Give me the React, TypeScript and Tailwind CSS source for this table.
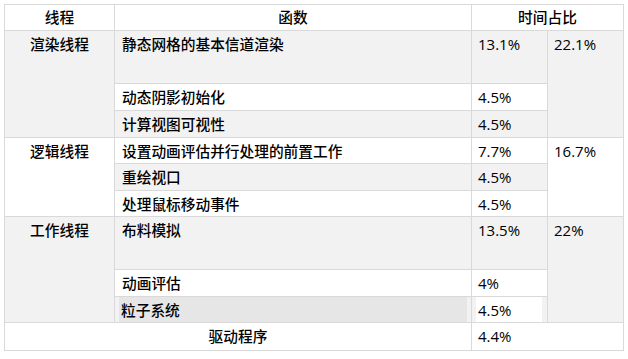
const cell = "flex items-start leading-[18px] pt-[4px]";
const num = "flex items-start leading-[18px] pt-[4px] text-[15px] font-normal";

export default function App() {
  return (
    <div className="min-h-screen bg-white pl-[4px] pt-[4px] text-[14.7px] font-medium text-black" style={{ fontFamily: '"Open Sans", "Noto Sans CJK SC", sans-serif' }}>
      <div className="grid w-fit grid-cols-[109px_356px_75px_75px] grid-rows-[25px_52px_26px_26px_25px_26px_25px_52px_26px_25px_27px] gap-px bg-[#d9d9d9] p-px">
        {/* header */}
        <div className="col-start-1 row-start-1 flex items-center justify-center bg-white">线程</div>
        <div className="col-start-2 row-start-1 flex items-center justify-center bg-white">函数</div>
        <div className="col-start-3 col-span-2 row-start-1 flex items-center justify-center bg-white">时间占比</div>

        {/* 渲染线程 */}
        <div className={`${cell} col-start-1 row-start-2 row-span-3 justify-center bg-[#f2f2f2]`}>渲染线程</div>
        <div className={`${cell} col-start-2 row-start-2 pl-[7px] bg-[#f2f2f2]`}>静态网格的基本信道渲染</div>
        <div className={`${num} col-start-3 row-start-2 pl-[6px] bg-[#f2f2f2]`}>13.1%</div>
        <div className={`${num} col-start-4 row-start-2 row-span-3 pl-[6px] bg-[#f2f2f2]`}>22.1%</div>
        <div className={`${cell} col-start-2 row-start-3 pl-[7px] bg-white`}>动态阴影初始化</div>
        <div className={`${num} col-start-3 row-start-3 pl-[6px] bg-white`}>4.5%</div>
        <div className={`${cell} col-start-2 row-start-4 pl-[7px] bg-[#f2f2f2]`}>计算视图可视性</div>
        <div className={`${num} col-start-3 row-start-4 pl-[6px] bg-[#f2f2f2]`}>4.5%</div>

        {/* 逻辑线程 */}
        <div className={`${cell} col-start-1 row-start-5 row-span-3 justify-center bg-white`}>逻辑线程</div>
        <div className={`${cell} col-start-2 row-start-5 pl-[7px] bg-white`}>设置动画评估并行处理的前置工作</div>
        <div className={`${num} col-start-3 row-start-5 pl-[6px] bg-white`}>7.7%</div>
        <div className={`${num} col-start-4 row-start-5 row-span-3 pl-[6px] bg-white`}>16.7%</div>
        <div className={`${cell} col-start-2 row-start-6 pl-[7px] bg-[#f2f2f2]`}>重绘视口</div>
        <div className={`${num} col-start-3 row-start-6 pl-[6px] bg-[#f2f2f2]`}>4.5%</div>
        <div className={`${cell} col-start-2 row-start-7 pl-[7px] bg-white`}>处理鼠标移动事件</div>
        <div className={`${num} col-start-3 row-start-7 pl-[6px] bg-white`}>4.5%</div>

        {/* 工作线程 */}
        <div className={`${cell} col-start-1 row-start-8 row-span-3 justify-center bg-[#f2f2f2]`}>工作线程</div>
        <div className={`${cell} col-start-2 row-start-8 pl-[7px] bg-[#f2f2f2]`}>布料模拟</div>
        <div className={`${num} col-start-3 row-start-8 pl-[6px] bg-[#f2f2f2]`}>13.5%</div>
        <div className={`${num} col-start-4 row-start-8 row-span-3 pl-[6px] bg-[#f2f2f2]`}>22%</div>
        <div className={`${cell} col-start-2 row-start-9 pl-[7px] bg-white`}>动画评估</div>
        <div className={`${num} col-start-3 row-start-9 pl-[6px] bg-white`}>4%</div>
        <div className="col-start-2 row-start-10 flex bg-[#f2f2f2] pl-[4px] pr-[4px]">
          <div className={`${cell} flex-1 pl-[2px] bg-[#e6e6e6]`}>粒子系统</div>
        </div>
        <div className="col-start-3 row-start-10 flex bg-[#f2f2f2] pl-[4px] pr-[5px]">
          <div className={`${num} flex-1 pl-[2px] bg-white`}>4.5%</div>
        </div>

        {/* 驱动程序 */}
        <div className={`${cell} col-start-1 col-span-2 row-start-11 justify-center bg-white`}>驱动程序</div>
        <div className={`${num} col-start-3 col-span-2 row-start-11 pl-[6px] bg-white`}>4.4%</div>
      </div>
    </div>
  );
}
